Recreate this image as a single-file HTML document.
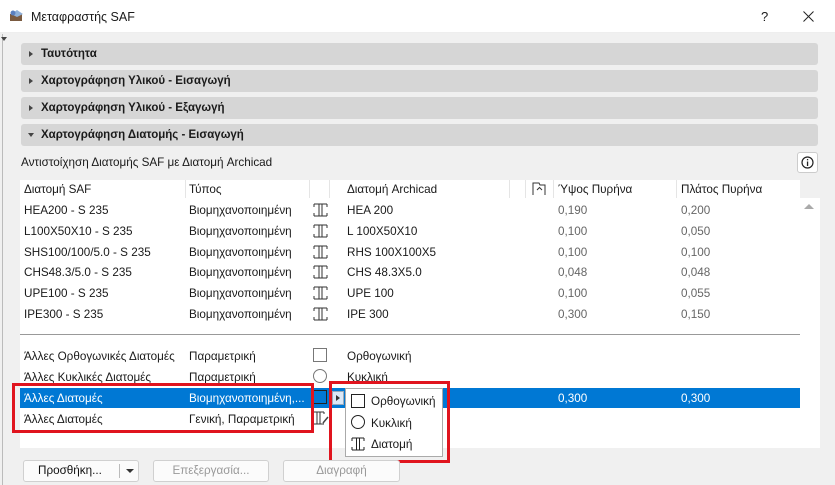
<!DOCTYPE html><html><head><meta charset="utf-8"><style>
*{margin:0;padding:0;box-sizing:border-box}
body{width:835px;height:485px;overflow:hidden;background:#f0f0f0;font-family:"Liberation Sans","DejaVu Sans",sans-serif;font-size:11.7px;color:#1a1a1a;position:relative}
.a{position:absolute;white-space:nowrap}
.bar{position:absolute;left:21px;width:797px;height:22px;background:#d6d6d6;border-radius:3px;font-weight:bold;font-size:11.5px;line-height:22px;padding-left:20px}
.tri{position:absolute;left:8px;top:8px;width:0;height:0;border-left:4px solid #444;border-top:3px solid transparent;border-bottom:3px solid transparent}
.trid{position:absolute;left:7px;top:9px;width:0;height:0;border-top:4px solid #444;border-left:3px solid transparent;border-right:3px solid transparent}
.v{color:#666}
.btn{position:absolute;top:460px;height:22px;border:1px solid #d0d0d0;border-radius:3px;background:#fbfbfb;text-align:center;line-height:20px;font-size:11.7px}
.rb{position:absolute;border:3px solid #e0141e}
</style></head><body>
<div class="a" style="left:0;top:0;width:835px;height:33px;background:#fff;border-bottom:1px solid #eee"></div>
<svg class="a" style="left:9px;top:9px" width="16" height="14"><rect x="1" y="5" width="12" height="7" fill="#7a5a40"/><path d="M2 5 L8 1 L14 5 L8 8Z" fill="#8fb0d8"/><circle cx="4" cy="4" r="2.5" fill="#5a7fbf"/></svg>
<div class="a" style="left:31px;top:10px;font-size:12.5px">Μεταφραστής SAF</div>
<div class="a" style="left:761px;top:9px;font-size:13px">?</div>
<svg class="a" style="left:803px;top:11px" width="11" height="11"><path d="M0.5 0.5L10.5 10.5M10.5 0.5L0.5 10.5" stroke="#222" stroke-width="1"/></svg>
<div class="a" style="left:2px;top:34px;width:1px;height:451px;background:#bbb"></div>
<div class="a" style="left:1px;top:37px;width:0;height:0;border-top:4px solid #444;border-left:3px solid transparent;border-right:3px solid transparent"></div>
<div class="bar" style="top:43px"><span class="tri"></span>Ταυτότητα</div>
<div class="bar" style="top:70px"><span class="tri"></span>Χαρτογράφηση Υλικού - Εισαγωγή</div>
<div class="bar" style="top:97px"><span class="tri"></span>Χαρτογράφηση Υλικού - Εξαγωγή</div>
<div class="bar" style="top:124px"><span class="trid"></span>Χαρτογράφηση Διατομής - Εισαγωγή</div>
<div class="a" style="left:21px;top:156px">Αντιστοίχηση Διατομής SAF με Διατομή Archicad</div>
<div class="a" style="left:797px;top:152px;width:21px;height:21px;border:1px solid #ccc;border-radius:3px;background:#fff"><svg style="position:absolute;left:3px;top:3px" width="13" height="13"><circle cx="6.5" cy="6.5" r="5.5" fill="none" stroke="#222" stroke-width="1.2"/><rect x="5.9" y="5.5" width="1.3" height="4.5" fill="#222"/><rect x="5.9" y="3" width="1.3" height="1.3" fill="#222"/></svg></div>
<div class="a" style="left:20px;top:180px;width:780px;height:268px;background:#fff"></div>
<div class="a" style="left:800px;top:198px;width:20px;height:250px;background:#fff"></div>
<div class="a" style="left:804px;top:204px;width:0;height:0;border-bottom:5px solid #aaa;border-left:5px solid transparent;border-right:5px solid transparent"></div>
<div class="a" style="left:185px;top:180px;width:1px;height:18px;background:#e5e5e5"></div>
<div class="a" style="left:309px;top:180px;width:1px;height:18px;background:#e5e5e5"></div>
<div class="a" style="left:329px;top:180px;width:1px;height:18px;background:#e5e5e5"></div>
<div class="a" style="left:509px;top:180px;width:1px;height:18px;background:#e5e5e5"></div>
<div class="a" style="left:525px;top:180px;width:1px;height:18px;background:#e5e5e5"></div>
<div class="a" style="left:553px;top:180px;width:1px;height:18px;background:#e5e5e5"></div>
<div class="a" style="left:676px;top:180px;width:1px;height:18px;background:#e5e5e5"></div>
<div class="a" style="left:24px;top:183px">Διατομή SAF</div>
<div class="a" style="left:189px;top:183px">Τύπος</div>
<div class="a" style="left:347px;top:183px">Διατομή Archicad</div>
<svg class="a" style="left:532px;top:182px" width="15" height="14"><path d="M1 13V1h6l1 2h5v10" fill="none" stroke="#333"/><path d="M5 8l2.5-2.5L10 8" fill="none" stroke="#333"/></svg>
<div class="a" style="left:558px;top:183px">Ύψος Πυρήνα</div>
<div class="a" style="left:681px;top:183px">Πλάτος Πυρήνα</div>
<div id="rows"></div>
<div class="a" style="left:20px;top:334px;width:780px;height:1px;background:#999"></div>
<div class="a" style="left:20px;top:388px;width:780px;height:20px;background:#0078d4"></div>
<div class="a" style="left:24px;top:350px">Άλλες Ορθογωνικές Διατομές</div><div class="a" style="left:189px;top:350px">Παραμετρική</div><div class="a" style="left:313px;top:348px;width:14px;height:14px;border:1px solid #777"></div><div class="a" style="left:347px;top:350px">Ορθογωνική</div>
<div class="a" style="left:24px;top:371px">Άλλες Κυκλικές Διατομές</div><div class="a" style="left:189px;top:371px">Παραμετρική</div><div class="a" style="left:313px;top:369px;width:14px;height:14px;border:1px solid #777;border-radius:50%"></div><div class="a" style="left:347px;top:371px">Κυκλική</div>
<div class="a" style="left:24px;top:392px;color:#fff">Άλλες Διατομές</div><div class="a" style="left:189px;top:392px;color:#fff">Βιομηχανοποιημένη,...</div><div class="a" style="left:313px;top:390px;width:14px;height:14px;border:1px solid #222"></div>
<div class="a" style="left:332px;top:391px;width:12px;height:14px;background:#dbe8f7;border:1px solid #9ab"></div><div class="a" style="left:336px;top:395px;width:0;height:0;border-left:4px solid #333;border-top:3.5px solid transparent;border-bottom:3.5px solid transparent"></div>
<div class="a" style="left:558px;top:392px;color:#fff">0,300</div><div class="a" style="left:681px;top:392px;color:#fff">0,300</div>
<div class="a" style="left:24px;top:413px">Άλλες Διατομές</div><div class="a" style="left:189px;top:413px">Γενική, Παραμετρική</div>
<svg class="a" style="left:312px;top:411px" width="18" height="14"><path d="M1 1h11M1 13h11M5 1v12M8 1v12M1 1v2M12 1v2M1 13v-2" fill="none" stroke="#333"/><path d="M11 12l5-6" stroke="#444" stroke-width="1.5"/></svg>
<div class="a" style="left:345px;top:388px;width:98px;height:69px;background:#fff;border:1px solid #aaa"></div>
<div class="a" style="left:351px;top:394px;width:14px;height:14px;border:1px solid #222"></div><div class="a" style="left:371px;top:395px">Ορθογωνική</div>
<div class="a" style="left:351px;top:415px;width:14px;height:14px;border:1px solid #222;border-radius:50%"></div><div class="a" style="left:371px;top:417px">Κυκλική</div>
<svg class="a" style="left:351px;top:437px" width="14" height="14"><path d="M1 1h12M1 13h12M5.5 1v12M8.5 1v12M1 1v3M13 1v3M1 13v-3M13 13v-3" fill="none" stroke="#222"/></svg><div class="a" style="left:371px;top:438px">Διατομή</div>
<div class="rb" style="left:12px;top:383px;width:302px;height:50px"></div>
<div class="rb" style="left:329px;top:381px;width:121px;height:82px"></div>
<div class="btn" style="left:23px;width:116px;text-align:left;padding-left:14px;color:#111">Προσθήκη...<span style="position:absolute;left:95px;top:3px;width:1px;height:14px;background:#bbb"></span><span style="position:absolute;left:102px;top:8px;width:0;height:0;border-top:4px solid #333;border-left:4px solid transparent;border-right:4px solid transparent"></span></div>
<div class="btn" style="left:153px;width:116px;color:#999">Επεξεργασία...</div>
<div class="btn" style="left:283px;width:117px;color:#999">Διαγραφή</div>
<script>
var d=[["HEA200 - S 235","HEA 200","0,190","0,200"],["L100X50X10 - S 235","L 100X50X10","0,100","0,050"],["SHS100/100/5.0 - S 235","RHS 100X100X5","0,100","0,100"],["CHS48.3/5.0 - S 235","CHS 48.3X5.0","0,048","0,048"],["UPE100 - S 235","UPE 100","0,100","0,055"],["IPE300 - S 235","IPE 300","0,300","0,150"]];
var h="";d.forEach(function(r,i){var y=204+i*20.8;
h+='<div class="a" style="left:24px;top:'+y+'px">'+r[0]+'</div><div class="a" style="left:189px;top:'+y+'px">Βιομηχανοποιημένη</div>'+
'<svg class="a" style="left:313px;top:'+(y-1)+'px" width="15" height="14"><path d="M1 1h13M1 13h13M6 1v12M9 1v12M1 1v3M14 1v3M1 13v-3M14 13v-3" fill="none" stroke="#333"/></svg>'+
'<div class="a" style="left:347px;top:'+y+'px">'+r[1]+'</div><div class="a v" style="left:558px;top:'+y+'px">'+r[2]+'</div><div class="a v" style="left:681px;top:'+y+'px">'+r[3]+'</div>';});
document.getElementById("rows").innerHTML=h;
</script>
</body></html>
